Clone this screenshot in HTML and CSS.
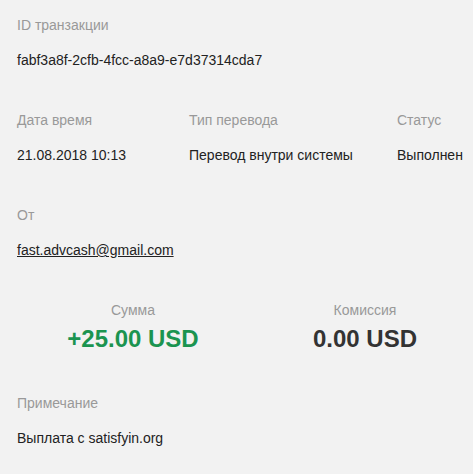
FILE: index.html
```html
<!DOCTYPE html>
<html lang="ru">
<head>
    <meta charset="UTF-8">
    <meta name="viewport" content="width=device-width, initial-scale=1.0">
    <title>Транзакция</title>
    <link rel="stylesheet" href="styles.css">
</head>
<body>
    <div class="details">
        <div class="section">
            <div class="label">ID транзакции</div>
            <div class="value">fabf3a8f-2cfb-4fcc-a8a9-e7d37314cda7</div>
        </div>

        <div class="section row">
            <div class="cell">
                <div class="label">Дата время</div>
                <div class="value">21.08.2018 10:13</div>
            </div>
            <div class="cell">
                <div class="label">Тип перевода</div>
                <div class="value">Перевод внутри системы</div>
            </div>
            <div class="cell">
                <div class="label">Статус</div>
                <div class="value">Выполнен</div>
            </div>
        </div>

        <div class="section">
            <div class="label">От</div>
            <div class="value"><a href="#">fast.advcash@gmail.com</a></div>
        </div>

        <div class="section amounts">
            <div class="amount">
                <div class="label">Сумма</div>
                <div class="sum plus">+25.00 USD</div>
            </div>
            <div class="amount">
                <div class="label">Комиссия</div>
                <div class="sum">0.00 USD</div>
            </div>
        </div>

        <div class="section">
            <div class="label">Примечание</div>
            <div class="value">Выплата с satisfyin.org</div>
        </div>
    </div>
</body>
</html>
```

FILE: styles.css
```css
*{
    margin: 0;
    padding: 0;
    box-sizing: border-box;
}

html{
    overflow: hidden;
}

body{
    background-color: #f2f2f2;
    font-family: "Liberation Sans", Arial, sans-serif;
    font-size: 14px;
    line-height: 20px;
    color: #222;
}

.details{
    padding: 15px 0 0 17px;
}

.section{
    margin-bottom: 40px;
}

.label{
    color: #999;
    margin-bottom: 15px;
}

.value a{
    color: #222;
    text-decoration: underline;
}

.row{
    display: grid;
    grid-template-columns: 172px 208px auto;
}

.amounts{
    display: grid;
    grid-template-columns: 232px 232px;
    text-align: center;
}

.amount .label{
    margin-bottom: 5px;
}

.sum{
    font-size: 24px;
    line-height: 28px;
    font-weight: bold;
    color: #333;
}

.sum.plus{
    color: #1b9450;
}
```
